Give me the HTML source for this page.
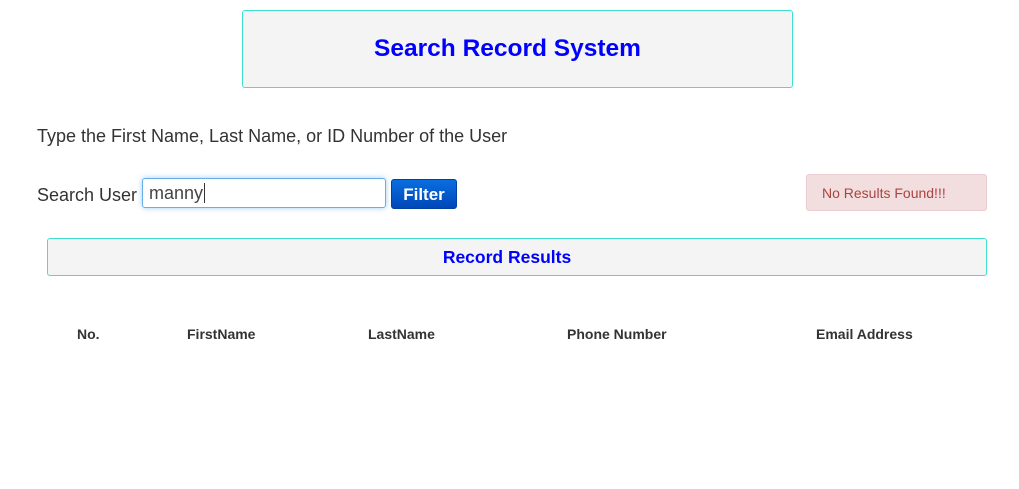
<!DOCTYPE html>
<html><head><style>
body{margin:0;width:1019px;height:489px;background:#fff;font-family:"Liberation Sans",sans-serif;color:#333;position:relative;overflow:hidden}
.a{position:absolute}
.hdr{left:242px;top:10px;width:549px;height:76px;background:#f4f4f4;border:1px solid #40e0d0;border-radius:3px;text-align:center;line-height:76px;font-size:24.5px;font-weight:bold;color:#0000ff;box-sizing:content-box}
.hdr span,.rr span{position:relative;left:-10px}
.rr{left:47px;top:238px;width:938px;height:36px;background:#f4f4f4;border:1px solid #40e0d0;border-radius:3px;text-align:center;line-height:36px;font-size:17.5px;font-weight:bold;color:#0000ff}
.inp{left:142px;top:178px;border:1px solid #66afe9;border-radius:3px;box-shadow:0 0 6px rgba(102,175,233,.6);font-size:18px;line-height:28px;padding-left:6px;box-sizing:border-box;width:244px;height:30px;color:#444}
.btn{left:391px;top:179px;width:66px;height:30px;border-radius:3px;background:linear-gradient(#0a6ee0,#0047b8);color:#fff;font-size:17px;font-weight:bold;text-align:center;line-height:30px;border:1px solid #0040a0;box-sizing:border-box}
.al{left:806px;top:174px;width:181px;height:37px;background:#f2dede;border:1px solid #ebccd1;border-radius:3px;box-sizing:border-box;color:#a94442;font-size:14px;line-height:36px;padding-left:15px}
.th{top:326px;font-size:14px;font-weight:bold;color:#333}
</style></head><body>
<div class="a hdr"><span>Search Record System</span></div>
<div class="a" style="left:37px;top:126px;font-size:18px">Type the First Name, Last Name, or ID Number of the User</div>
<div class="a" style="left:37px;top:185px;font-size:18px">Search User</div>
<div class="a inp">manny<span style="border-left:1px solid #333;margin-left:1px"></span></div>
<div class="a btn">Filter</div>
<div class="a al">No Results Found!!!</div>
<div class="a rr"><span>Record Results</span></div>
<div class="a th" style="left:77px">No.</div>
<div class="a th" style="left:187px">FirstName</div>
<div class="a th" style="left:368px">LastName</div>
<div class="a th" style="left:567px">Phone Number</div>
<div class="a th" style="left:816px">Email Address</div>
</body></html>
